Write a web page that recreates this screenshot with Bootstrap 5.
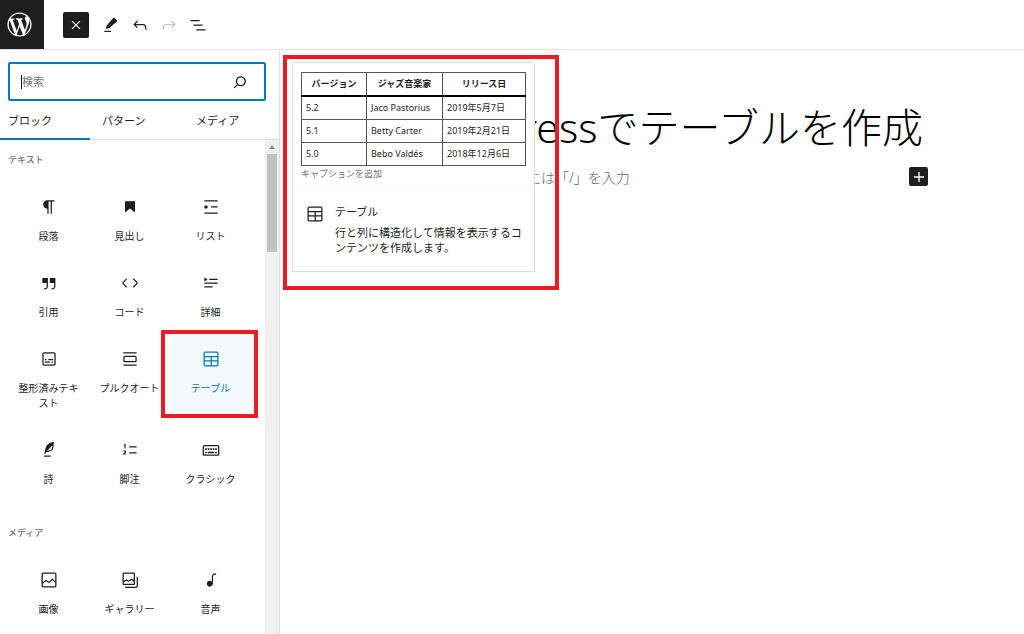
<!DOCTYPE html>
<html lang="ja">
<head>
<meta charset="utf-8">
<meta name="viewport" content="width=device-width, initial-scale=1">
<title>WordPress エディター</title>
<link href="https://cdn.jsdelivr.net/npm/bootstrap@5.3.0/dist/css/bootstrap.min.css" rel="stylesheet">
<style>
:root { --ink: #1e1e1e; --accent: #007cba; --line: #e0e0e0; --callout: #ed1c24; }
body { font-family: "Noto Sans", "Noto Sans CJK JP", sans-serif; font-size: 10px; line-height: 15px; color: var(--ink); }
button { font: inherit; color: inherit; }
svg { fill: currentColor; display: block; flex: none; }
.ico { width: 20px; height: 20px; }
.topbar { height: 50px; border-bottom: 1px solid var(--line); }
.wp-logo { width: 44px; padding-left: 5px; background: var(--ink); color: #fff; }
.wp-logo svg { width: 29px; height: 29px; }
.tool { width: 29px; height: 26px; background: none; }
.dark-btn { background: var(--ink); color: #fff; border-radius: 2px; }
.close-btn { width: 26px; height: 26px; margin: 0 7px 0 19px; }
.inserter { width: 280px; border-right: 1px solid var(--line); }
.search-wrap { margin: 12px 13px 0 8px; height: 39px; border: 2px solid var(--accent); border-radius: 2px; padding: 0 14px 0 11px; }
.caret { width: 1px; height: 14px; background: var(--ink); }
.search-wrap input { font-size: 11px; line-height: 16px; outline: 0; color: var(--ink); }
.search-wrap input::placeholder { color: #757575; }
.tabs { height: 39px; border-bottom: 1px solid var(--line); gap: 4px; }
.tab-btn { flex: 0 0 90px; font-size: 11px; background: none; padding: 1px 8px 0; border-bottom: 2px solid transparent; margin-bottom: -1px; }
.tab-btn.active { border-bottom-color: var(--accent); }
.blocks { padding: 12px 14px 0 8px; }
.group-name { font-size: 9px; line-height: 16px; color: #757575; margin: 0 0 8px; }
.block-grid { display: grid; grid-template-columns: repeat(3, 1fr); margin-bottom: 30px; }
.block-cell { padding-bottom: 8px; }
.block-btn { background: none; padding: 21px 10px 0; gap: 12px; border-radius: 2px; }
.block-btn span { white-space: normal; }
.block-btn.current { background: #f3f9fd; color: var(--accent); }
.callout { border: 4px solid var(--callout); pointer-events: none; }
.callout-item { inset: 2px -7px 1px -9px; z-index: 2; }
.scroll-track { width: 14px; background: #f0f0f0; padding: 5px 2px; }
.scroll-track i { width: 0; border: 3px solid transparent; border-top: 0; border-bottom: 4px solid #8a8a8a; }
.scroll-thumb { height: 98px; margin-top: 5px; background: #c1c1c1; }
.preview-area { left: 283px; top: 55px; padding: 3px 20px 14px 5px; z-index: 3; }
.preview { width: 243px; border: 1px solid #ddd; border-radius: 2px; }
.sample { padding: 9px 8px 8px; border-bottom: 1px solid #f6f6f6; font-size: 9px; }
.sample table { width: 225px; border-collapse: collapse; table-layout: fixed; line-height: 14px; }
.sample th, .sample td { border: 1px solid #555; padding: 4px; white-space: nowrap; }
.sample thead { border-bottom: 2px solid #000; }
.sample th { text-align: center; }
.sample th:nth-child(1) { width: 65px; }
.sample th:nth-child(2) { width: 76px; }
.about { padding: 14px 12px 16px; gap: 10px; font-size: 11px; }
.about h2 { font-size: 11px; line-height: 16px; font-weight: 400; margin: 0 0 5px; }
.canvas-col { max-width: 552px; margin: 0 auto; padding-top: 50px; }
.post-title { font-weight: 300; font-size: 41px; line-height: 54px; color: #000; white-space: nowrap; text-align: right; padding-right: 5px; margin: 0 0 13px; }
.prompt { font-size: 14px; line-height: 22px; font-weight: 300; color: #666; padding-left: 25px; }
.add-btn { width: 19px; height: 19px; }
</style>
</head>
<body class="vh-100 d-flex flex-column overflow-hidden bg-white position-relative">
<header class="topbar d-flex align-items-center flex-shrink-0">
  <a href="#" class="wp-logo d-flex align-items-center align-self-stretch" aria-label="WordPress"><svg viewBox="-2 -2 24 24"><path d="M20 10c0-5.51-4.49-10-10-10C4.48 0 0 4.49 0 10c0 5.52 4.48 10 10 10 5.51 0 10-4.48 10-10zM7.78 15.37L4.37 6.22c.55-.02 1.17-.08 1.17-.08.5-.06.44-1.13-.06-1.11 0 0-1.45.11-2.37.11-.18 0-.37 0-.58-.01C4.12 2.69 6.87 1.11 10 1.11c2.33 0 4.45.87 6.05 2.34-.68-.11-1.65.39-1.65 1.58 0 .74.45 1.36.9 2.1.35.61.55 1.36.55 2.46 0 1.49-1.4 5-1.4 5l-3.03-8.37c.54-.02.82-.17.82-.17.5-.05.44-1.25-.06-1.22 0 0-1.44.12-2.38.12-.87 0-2.33-.12-2.33-.12-.5-.03-.56 1.2-.06 1.22l.92.08 1.26 3.41zM17.41 10c.24-.64.74-1.87.43-4.25.7 1.29 1.05 2.71 1.05 4.25 0 3.29-1.73 6.24-4.4 7.78.97-2.59 1.94-5.2 2.92-7.78zM6.1 18.09C3.12 16.65 1.11 13.53 1.11 10c0-1.3.23-2.48.72-3.59C3.25 10.3 4.67 14.2 6.1 18.09zm4.03-6.63l2.58 6.98c-.86.29-1.76.45-2.71.45-.79 0-1.57-.11-2.29-.33.81-2.38 1.62-4.74 2.42-7.1z"/></svg></a>
  <button class="close-btn dark-btn border-0 p-0 d-flex align-items-center justify-content-center" aria-label="閉じる"><svg class="ico" viewBox="0 0 24 24"><path d="M7.8 6.8 12 11l4.2-4.2 1 1L13 12l4.2 4.2-1 1L12 13l-4.2 4.2-1-1L11 12 6.8 7.8z"/></svg></button>
  <button class="tool border-0 p-0 d-flex align-items-center justify-content-center" aria-label="編集"><svg class="ico" viewBox="0 0 24 24"><path d="M19 6.200 16.300 3.600c-.5-.5-1.200-.4-1.700.1L6.800 12.500l-1.200 4.300 4.400-1.200L19 7.700c.4-.4.4-1.100 0-1.500zM4 20.500h8V19H4v1.500z"/></svg></button>
  <button class="tool border-0 p-0 d-flex align-items-center justify-content-center" aria-label="元に戻す"><svg class="ico" viewBox="0 0 24 24"><path d="M18.3 11.7c-.6-.6-1.4-.9-2.3-.9H6.7l2.9-3.3-1.1-1-4.5 5L8.5 16l1-1-2.7-2.7H16c.5 0 .9.2 1.3.5 1 1 1 3.4 1 4.5v.3h1.5v-.2c0-1.5 0-4.3-1.5-5.7z"/></svg></button>
  <button class="tool border-0 p-0 d-flex align-items-center justify-content-center" aria-label="やり直す"><svg class="ico opacity-25" viewBox="0 0 24 24"><path d="M15.6 6.5l-1.1 1 2.9 3.3H8c-.9 0-1.7.3-2.3.9-1.4 1.5-1.4 4.2-1.4 5.6v.2h1.5v-.3c0-1.1 0-3.5 1-4.5.3-.3.7-.5 1.3-.5h9.2L14.5 15l1.1 1.1 4.6-4.6-4.6-5z"/></svg></button>
  <button class="tool border-0 p-0 d-flex align-items-center justify-content-center" aria-label="リスト表示"><svg class="ico" viewBox="0 0 24 24"><path d="M3 6h11v1.5H3V6Zm3.5 5.5h11V13h-11v-1.5ZM21 17H10v1.5h11V17Z"/></svg></button>
</header>

<div class="d-flex flex-grow-1 overflow-hidden">
  <aside class="inserter d-flex flex-column flex-shrink-0">
    <div class="search-wrap d-flex align-items-center flex-shrink-0">
      <span class="caret"></span>
      <input type="text" class="border-0 p-0 flex-grow-1 bg-transparent" placeholder="検索" aria-label="検索">
      <svg class="ico" viewBox="0 0 24 24"><path d="M13 5c-3.3 0-6 2.7-6 6 0 1.4.5 2.7 1.3 3.7l-3.8 3.8 1.1 1.1 3.8-3.8c1 .8 2.3 1.3 3.7 1.3 3.3 0 6-2.7 6-6S16.3 5 13 5zm0 10.5c-2.5 0-4.5-2-4.5-4.5s2-4.5 4.5-4.5 4.5 2 4.5 4.5-2 4.5-4.5 4.5z"/></svg>
    </div>
    <div class="tabs d-flex flex-shrink-0" role="tablist">
      <button class="tab-btn active border-top-0 border-start-0 border-end-0 text-start" role="tab">ブロック</button>
      <button class="tab-btn border-top-0 border-start-0 border-end-0 text-start" role="tab">パターン</button>
      <button class="tab-btn border-top-0 border-start-0 border-end-0 text-start" role="tab">メディア</button>
    </div>
    <div class="d-flex flex-grow-1 overflow-hidden">
      <div class="blocks flex-grow-1">
        <h2 class="group-name">テキスト</h2>
        <div class="block-grid">
          <div class="block-cell d-flex"><button class="block-btn border-0 w-100 d-flex flex-column align-items-center"><svg class="ico" viewBox="0 0 24 24"><path d="m9.996 14v-.225l.004 0v6.225h1.5v-14.5h2.5v14.5h1.5v-14.5h3v-1.5h-8.504c-2.761 0-5 2.239-5 5 0 2.761 2.239 5 5 5z"/></svg><span>段落</span></button></div>
          <div class="block-cell d-flex"><button class="block-btn border-0 w-100 d-flex flex-column align-items-center"><svg class="ico" viewBox="0 0 24 24"><path d="M6 5v13.6l6-4.75 6 4.75V5z"/></svg><span>見出し</span></button></div>
          <div class="block-cell d-flex"><button class="block-btn border-0 w-100 d-flex flex-column align-items-center"><svg class="ico" viewBox="0 0 24 24"><path d="M4 4v1.500h16V4H4zm8 8.500h8V11h-8v1.500zM4 20h16v-1.500H4V20zm4-8c0-1.100-.9-2-2-2s-2 .9-2 2 .9 2 2 2 2-.9 2-2z"/></svg><span>リスト</span></button></div>
          <div class="block-cell d-flex"><button class="block-btn border-0 w-100 d-flex flex-column align-items-center"><svg class="ico" viewBox="0 0 24 24"><path d="M13 6v6h5.2v4c0 .8-.2 1.4-.5 1.7-.6.6-1.6.6-2.5.5h-.3v1.5h.5c1 0 2.3-.1 3.3-1 .6-.6 1-1.6 1-2.8V6H13zm-9 6h5.2v4c0 .8-.2 1.4-.5 1.7-.6.6-1.6.6-2.5.5h-.3v1.5h.5c1 0 2.3-.1 3.3-1 .6-.6 1-1.6 1-2.8V6H4v6z"/></svg><span>引用</span></button></div>
          <div class="block-cell d-flex"><button class="block-btn border-0 w-100 d-flex flex-column align-items-center"><svg class="ico" viewBox="0 0 24 24"><path d="M20.8 10.7l-4.3-4.3-1.1 1.1 4.3 4.3c.1.1.1.3 0 .4l-4.3 4.3 1.1 1.1 4.3-4.3c.7-.8.7-1.9 0-2.6zM4.2 11.8l4.3-4.3-1-1-4.3 4.3c-.7.7-.7 1.8 0 2.5l4.3 4.3 1.1-1.1-4.3-4.3c-.2-.1-.2-.3-.1-.4z"/></svg><span>コード</span></button></div>
          <div class="block-cell d-flex"><button class="block-btn border-0 w-100 d-flex flex-column align-items-center"><svg class="ico" viewBox="0 0 24 24"><path d="M4 16h10v1.500H4V16Zm0-4.500h16V13H4v-1.500ZM10 7h10v1.500H10V7ZM4 5.250l4 2.500-4 2.500z"/></svg><span>詳細</span></button></div>
          <div class="block-cell d-flex"><button class="block-btn border-0 w-100 d-flex flex-column align-items-center"><svg class="ico" viewBox="0 0 24 24"><path d="M18 4H6c-1.100 0-2 .9-2 2v12c0 1.100.9 2 2 2h12c1.100 0 2-.9 2-2V6c0-1.100-.9-2-2-2zm.5 14c0 .3-.2.5-.5.5H6c-.3 0-.5-.2-.5-.5V6c0-.3.2-.5.5-.5h12c.3 0 .5.2.5.5v12zM7 16.500h6V15H7v1.500zm4-4v1h6V12h-6v.500zM9 12H7v1.500h2V12zm6 4.500h2V15h-2v1.500z"/></svg><span>整形済みテキスト</span></button></div>
          <div class="block-cell d-flex"><button class="block-btn border-0 w-100 d-flex flex-column align-items-center"><svg class="ico" viewBox="0 0 24 24"><path d="M18 8H6c-1.100 0-2 .9-2 2v4c0 1.100.9 2 2 2h12c1.100 0 2-.9 2-2v-4c0-1.100-.9-2-2-2zm.5 6c0 .3-.2.5-.5.5H6c-.3 0-.5-.2-.5-.5v-4c0-.3.2-.5.5-.5h12c.3 0 .5.2.5.5v4zM4 4v1.500h16V4H4zm0 16h16v-1.500H4V20z"/></svg><span>プルクオート</span></button></div>
          <div class="block-cell d-flex position-relative"><button class="block-btn current border-0 w-100 d-flex flex-column align-items-center"><svg class="ico" viewBox="0 0 24 24"><path d="M19 3H5c-1.100 0-2 .9-2 2v14c0 1.100.9 2 2 2h14c1.100 0 2-.9 2-2V5c0-1.100-.9-2-2-2zM5 4.500h14c.3 0 .5.2.5.5v3.500h-15V5c0-.3.2-.5.5-.5zm8 5.500h6.500v3.500H13V10zm-1.500 3.500h-7V10h7v3.500zm-7 5.500v-4h7v4.500H5c-.3 0-.5-.2-.5-.5zm14.500.5h-6V15h6.500v4c0 .3-.2.5-.5.5z"/></svg><span>テーブル</span></button><div class="callout callout-item position-absolute"></div></div>
          <div class="block-cell d-flex"><button class="block-btn border-0 w-100 d-flex flex-column align-items-center"><svg class="ico" viewBox="0 0 24 24"><path d="M17.8 2l-.9.3c-.1 0-3.6 1-5.2 2.1C10 5.5 9.3 6.5 8.9 7.1c-.6.9-1.7 4.7-1.7 6.3l-.9 2.3c-.2.4 0 .8.4 1 .1 0 .2.1.3.1.3 0 .6-.2.7-.5l.6-1.5c.3 0 .7-.1 1.2-.2.7-.1 1.4-.3 2.2-.5.8-.2 1.6-.5 2.4-.8.7-.3 1.4-.7 1.9-1.2s.8-1.2 1-1.9c.2-.7.3-1.6.4-2.4.1-.8.1-1.7.2-2.5 0-.8.1-1.5.2-2.1V2zm-1.9 5.6c-.1.8-.2 1.5-.3 2.1-.2.6-.4 1-.6 1.3-.3.3-.8.6-1.4.9-.7.3-1.4.5-2.2.8-.6.2-1.3.3-1.8.4L15 7.5c.3-.3.6-.7 1-1.1 0 .4 0 .8-.1 1.2zM6 20h8v-1.5H6V20z"/></svg><span>詩</span></button></div>
          <div class="block-cell d-flex"><button class="block-btn border-0 w-100 d-flex flex-column align-items-center"><svg class="ico" viewBox="0 0 24 24"><path d="M11 7.500h9v1.500h-9zM11 14.700h9v1.500h-9z"/><path d="M4.600 6.400 6 5.500v4.700M4.400 13.600c.6-.9 2.300-.7 2.200.5-.1.900-1.300 1.600-2.200 2.600h2.500" fill="none" stroke="currentColor" stroke-width="1.300"/></svg><span>脚注</span></button></div>
          <div class="block-cell d-flex"><button class="block-btn border-0 w-100 d-flex flex-column align-items-center"><svg class="ico" viewBox="0 0 24 24"><path d="M20 6H4c-1.100 0-2 .9-2 2v9c0 1.100.9 2 2 2h16c1.100 0 2-.9 2-2V8c0-1.100-.9-2-2-2zm.5 11c0 .3-.2.5-.5.5H4c-.3 0-.5-.2-.5-.5V8c0-.3.2-.5.5-.5h16c.3 0 .5.2.5.5v9zM10 10H8v2h2v-2zm-5 2h2v-2H5v2zm8-2h-2v2h2v-2zm-5 6h8v-2H8v2zm6-4h2v-2h-2v2zm3 0h2v-2h-2v2zm0 4h2v-2h-2v2zM5 16h2v-2H5v2z"/></svg><span>クラシック</span></button></div>
        </div>
        <h2 class="group-name">メディア</h2>
        <div class="block-grid">
          <div class="block-cell d-flex"><button class="block-btn border-0 w-100 d-flex flex-column align-items-center"><svg class="ico" viewBox="0 0 24 24"><path d="M19 3H5c-1.100 0-2 .9-2 2v14c0 1.100.9 2 2 2h14c1.100 0 2-.9 2-2V5c0-1.100-.9-2-2-2zM5 4.500h14c.3 0 .5.2.5.5v8.400l-3-2.900c-.3-.3-.8-.3-1 0L11.900 14 9 12c-.3-.2-.6-.2-.8 0l-3.600 2.600V5c-.1-.3.1-.5.4-.5zm14 15H5c-.3 0-.5-.2-.5-.5v-2.400l4.100-3 3 1.900c.3.2.7.2.9-.1L16 12l3.500 3.400V19c0 .3-.2.5-.5.5z"/></svg><span>画像</span></button></div>
          <div class="block-cell d-flex"><button class="block-btn border-0 w-100 d-flex flex-column align-items-center"><svg class="ico" viewBox="0 0 24 24"><path fill-rule="evenodd" d="M16.375 4.500H4.625a.125.125 0 0 0-.125.125v8.254l2.859-1.540a.75.75 0 0 1 .68-.016l2.384 1.142 2.890-2.074a.75.75 0 0 1 .874 0l2.313 1.660V4.625a.125.125 0 0 0-.125-.125Zm.125 9.398-2.750-1.975-2.813 2.020a.75.75 0 0 1-.76.067l-2.444-1.170L4.500 14.583v1.792c0 .069.056.125.125.125h11.750a.125.125 0 0 0 .125-.125v-2.477ZM4.625 3C3.728 3 3 3.728 3 4.625v11.750C3 17.273 3.728 18 4.625 18h11.750c.898 0 1.625-.727 1.625-1.625V4.625C18 3.728 17.273 3 16.375 3H4.625ZM20 8v11c0 .69-.31 1-.999 1H6v1.500h13.001c1.520 0 2.499-.982 2.499-2.500V8H20Z"/></svg><span>ギャラリー</span></button></div>
          <div class="block-cell d-flex"><button class="block-btn border-0 w-100 d-flex flex-column align-items-center"><svg class="ico" viewBox="0 0 24 24"><path d="M17.700 4.300c-1.200 0-2.800 0-3.800 1-.6.6-.9 1.500-.9 2.600V14c-.6-.6-1.500-1-2.500-1C8.600 13 7 14.600 7 16.500S8.600 20 10.500 20c1.500 0 2.800-1 3.300-2.300.5-.8.7-1.800.7-2.500V7.900c0-.7.2-1.200.5-1.600.6-.6 1.800-.6 2.800-.6h.3V4.300h-.4z"/></svg><span>音声</span></button></div>
        </div>
      </div>
      <div class="scroll-track flex-shrink-0 d-flex flex-column align-items-center"><i></i><div class="scroll-thumb w-100"></div></div>
    </div>
  </aside>

  <main class="flex-grow-1 overflow-hidden">
    <div class="canvas-col">
      <h1 class="post-title">WordPressでテーブルを作成</h1>
      <div class="d-flex justify-content-between align-items-start">
        <p class="prompt mb-0">ブロックを選択するには「/」を入力</p>
        <button class="add-btn dark-btn border-0 p-0 d-flex align-items-center justify-content-center" aria-label="ブロックを追加"><svg class="ico" viewBox="0 0 24 24"><path d="M18 11.200h-5.200V6h-1.600v5.200H6v1.600h5.200V18h1.600v-5.200H18z"/></svg></button>
      </div>
    </div>
  </main>
</div>

<div class="callout preview-area position-absolute">
  <div class="preview bg-white">
    <div class="sample">
      <table>
        <thead><tr><th>バージョン</th><th>ジャズ音楽家</th><th>リリース日</th></tr></thead>
        <tbody>
          <tr><td>5.2</td><td>Jaco Pastorius</td><td>2019年5月7日</td></tr>
          <tr><td>5.1</td><td>Betty Carter</td><td>2019年2月21日</td></tr>
          <tr><td>5.0</td><td>Bebo Valdés</td><td>2018年12月6日</td></tr>
        </tbody>
      </table>
      <div class="text-secondary">キャプションを追加</div>
    </div>
    <div class="about d-flex">
      <svg class="ico" viewBox="0 0 24 24"><path d="M19 3H5c-1.100 0-2 .9-2 2v14c0 1.100.9 2 2 2h14c1.100 0 2-.9 2-2V5c0-1.100-.9-2-2-2zM5 4.500h14c.3 0 .5.2.5.5v3.500h-15V5c0-.3.2-.5.5-.5zm8 5.500h6.500v3.500H13V10zm-1.500 3.500h-7V10h7v3.500zm-7 5.500v-4h7v4.500H5c-.3 0-.5-.2-.5-.5zm14.500.5h-6V15h6.500v4c0 .3-.2.5-.5.5z"/></svg>
      <div><h2>テーブル</h2><p class="mb-0">行と列に構造化して情報を表示するコンテンツを作成します。</p></div>
    </div>
  </div>
</div>
<script src="https://cdn.jsdelivr.net/npm/bootstrap@5.3.0/dist/js/bootstrap.bundle.min.js"></script>
</body>
</html>
